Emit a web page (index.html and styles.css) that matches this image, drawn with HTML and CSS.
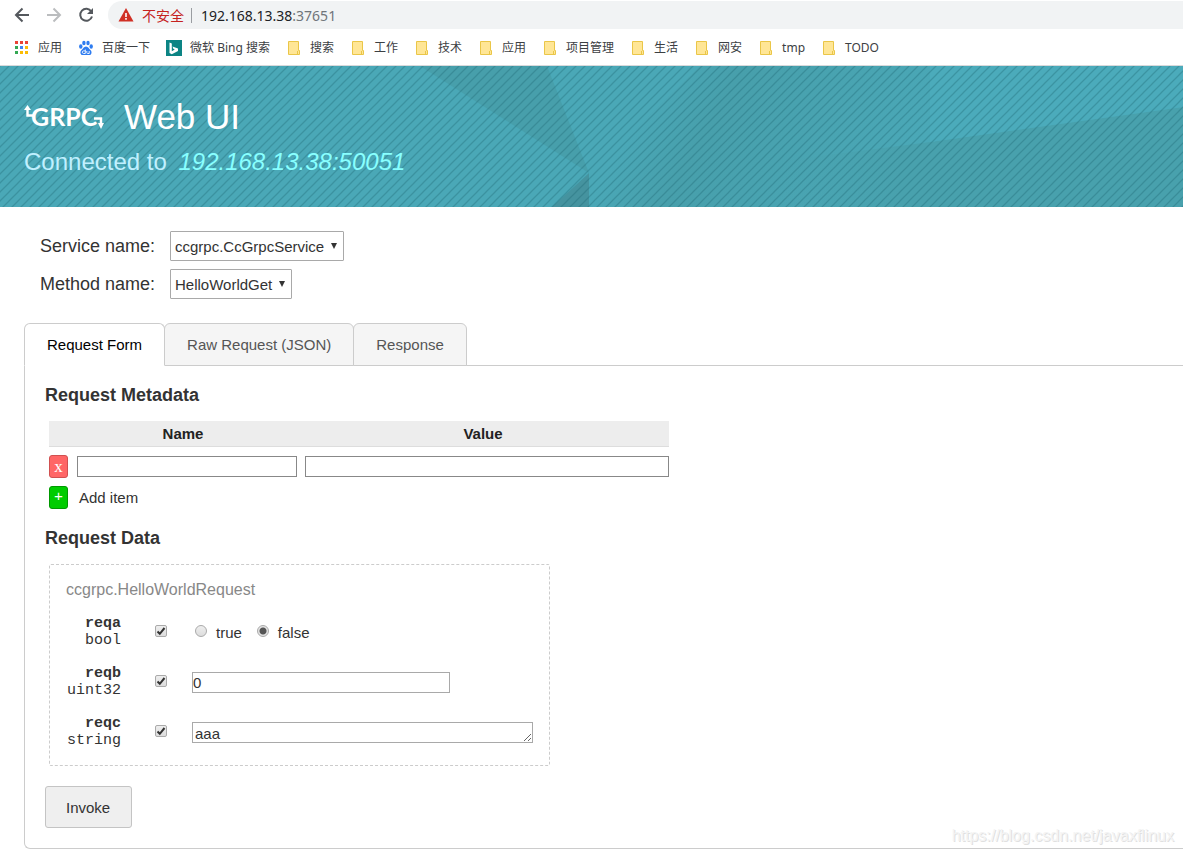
FILE: index.html
```html
<!DOCTYPE html>
<html lang="zh-CN">
<head>
<meta charset="utf-8">
<title>gRPC Web UI</title>
<link rel="stylesheet" href="styles.css">
</head>
<body>
<svg class="defs" aria-hidden="true">
  <symbol id="folder" viewBox="0 0 16 16">
    <path d="M2.500 1.500h10v9h1v4h-11z" fill="#ffe696" stroke="#eac648"/>
    <path d="M11.500 11v3.500" fill="none" stroke="#eac648"/>
  </symbol>
</svg>

<div class="toolbar">
  <button class="nav" aria-label="后退"><svg width="16" height="16" viewBox="0 0 16 16"><path d="M15 8H2.500M8.500 1.500 2 8l6.500 6.500" fill="none" stroke="#54585d" stroke-width="2"/></svg></button>
  <button class="nav" aria-label="前进"><svg width="16" height="16" viewBox="0 0 16 16"><path d="M1 8h12.500M7.500 1.500 14 8l-6.500 6.500" fill="none" stroke="#bbbdbf" stroke-width="2"/></svg></button>
  <button class="nav" aria-label="刷新"><svg width="16" height="16" viewBox="0 0 16 16"><path d="M13.300 4.500A6 6 0 1 0 14 9.500" fill="none" stroke="#54585d" stroke-width="2"/><path d="M15 1v6H9z" fill="#54585d"/></svg></button>
  <div class="omnibox">
    <svg class="warn" width="16" height="14" viewBox="0 0 16 14"><path d="M8 0l7.500 13.500H.5z" fill="#d03025"/><path d="M7.200 5h1.600v4H7.200zM7.200 10h1.600v1.700H7.200z" fill="#fff"/></svg>
    <span class="insecure">不安全</span>
    <span class="url">192.168.13.38<span class="port">:37651</span></span>
  </div>
</div>

<nav class="bookmarks">
  <a href="#"><svg viewBox="0 0 16 16"><g fill="#ea4335"><path d="M1 1h3v3H1zM6 1h3v3H6zM11 1h3v3h-3z"/></g><path d="M1 6h3v3H1zM1 11h3v3H1z" fill="#34a853"/><path d="M6 6h3v3H6z" fill="#4285f4"/><path d="M11 6h3v3h-3zM6 11h3v3H6zM11 11h3v3h-3z" fill="#fbbc05"/></svg>应用</a>
  <a href="#"><svg viewBox="0 0 16 16"><g fill="#2e7cf0"><ellipse cx="2.800" cy="6.500" rx="1.700" ry="2.200"/><ellipse cx="5.900" cy="3" rx="1.700" ry="2.300"/><ellipse cx="10" cy="3" rx="1.700" ry="2.300"/><ellipse cx="13.200" cy="6.500" rx="1.700" ry="2.200"/><path d="M8 6.500c2.400 0 2.700 2.300 4.600 3.700 1.500 1.300 1.300 4.800-1.300 4.800H4.700c-2.600 0-2.800-3.500-1.300-4.800C5.300 8.800 5.600 6.500 8 6.500z"/></g><path d="M7.300 9.500v4H5.500c-1.600 0-1.600-2.600 0-2.600h1.800M8.800 11v1.700c0 .8.500.8 1 .8h1.400V11" fill="none" stroke="#fff" stroke-width=".9"/></svg>百度一下</a>
  <a href="#"><svg viewBox="0 0 16 16"><path d="M0 0h16v16H0z" fill="#0c8484"/><path d="M3.500 2.500l2.300.9v7.800l3-1.700-1.500-.7-.8-2.200 5.500 2v2.300l-6.200 3.300-2.300-1.300z" fill="#fff"/></svg>微软 Bing 搜索</a>
  <a href="#"><svg><use href="#folder"/></svg>搜索</a>
  <a href="#"><svg><use href="#folder"/></svg>工作</a>
  <a href="#"><svg><use href="#folder"/></svg>技术</a>
  <a href="#"><svg><use href="#folder"/></svg>应用</a>
  <a href="#"><svg><use href="#folder"/></svg>项目管理</a>
  <a href="#"><svg><use href="#folder"/></svg>生活</a>
  <a href="#"><svg><use href="#folder"/></svg>网安</a>
  <a href="#"><svg><use href="#folder"/></svg>tmp</a>
  <a href="#"><svg><use href="#folder"/></svg>TODO</a>
</nav>

<header class="banner">
  <svg class="facets" viewBox="0 0 1183 141" preserveAspectRatio="xMinYMin slice" aria-hidden="true">
    <defs>
      <pattern id="stripes" width="9" height="9" patternUnits="userSpaceOnUse">
        <path d="M-2 11 11-2M-2 2 2-2M7 11l4-4" stroke="#1c6672" stroke-opacity=".34" stroke-width="1.300"/>
      </pattern>
      <linearGradient id="fold" gradientUnits="userSpaceOnUse" x1="640" y1="50" x2="860" y2="180">
        <stop offset="0" stop-color="#4aa8b7"/><stop offset=".25" stop-color="#479fab"/><stop offset="1" stop-color="#4aa8b7"/>
      </linearGradient>
      <linearGradient id="slope" gradientUnits="userSpaceOnUse" x1="780" y1="0" x2="900" y2="0">
        <stop offset="0" stop-color="#48a1ad" stop-opacity="0"/><stop offset="1" stop-color="#48a1ad"/>
      </linearGradient>
    </defs>
    <path d="M0 0h1183v141H0z" fill="#4aa8b7"/>
    <path d="M420 0h127l42 107z" fill="#479fab"/>
    <path d="M589 107 700 0h230v141H589z" fill="url(#fold)"/>
    <path d="M589 107v34H552z" fill="#45939f"/>
    <path d="M780 95 930 76 1183 41V141H780z" fill="url(#slope)"/>
    <path d="M930 0h253v41L930 76z" fill="#4babbb"/>
    <path d="M0 0h1183v141H0z" fill="url(#stripes)"/>
  </svg>
  <h1>
    <svg class="logo" width="80" height="32" viewBox="0 0 80 32" role="img" aria-label="gRPC">
      <text class="logo-text" x="7" y="25">GRPC</text>
      <path d="M3.500 7v7.500H9M70 17.500h7V24" fill="none" stroke="#fff" stroke-width="2.400"/>
      <path d="M0 9l3.500-5L7 9zM74 22h6l-3 6z" fill="#fff"/>
    </svg>
    Web UI
  </h1>
  <p>Connected to <em>192.168.13.38:50051</em></p>
</header>

<main>
  <form>
    <div class="selectors">
      <label for="service">Service name:</label>
      <span class="select"><select id="service"><option>ccgrpc.CcGrpcService</option></select></span>
      <label for="method">Method name:</label>
      <span class="select"><select id="method"><option>HelloWorldGet</option></select></span>
    </div>

    <div class="tabs" role="tablist">
      <button type="button" role="tab" class="tab active" aria-selected="true">Request Form</button>
      <button type="button" role="tab" class="tab">Raw Request (JSON)</button>
      <button type="button" role="tab" class="tab">Response</button>
    </div>

    <section class="panel">
      <h2>Request Metadata</h2>
      <table class="metadata">
        <thead><tr><th class="action"></th><th class="name">Name</th><th>Value</th></tr></thead>
        <tbody>
          <tr>
            <td><button type="button" class="mini remove">x</button></td>
            <td class="name"><input type="text" aria-label="Name"></td>
            <td class="value"><input type="text" aria-label="Value"></td>
          </tr>
          <tr>
            <td><button type="button" class="mini add" id="add">+</button></td>
            <td colspan="2" class="add-label"><label for="add">Add item</label></td>
          </tr>
        </tbody>
      </table>

      <h2>Request Data</h2>
      <div class="message">
        <h3>ccgrpc.HelloWorldRequest</h3>
        <div class="field">
          <label for="use-a"><b>reqa</b><br>bool</label>
          <input type="checkbox" id="use-a" checked>
          <div class="radios">
            <label><input type="radio" name="reqa">true</label>
            <label><input type="radio" name="reqa" checked>false</label>
          </div>
        </div>
        <div class="field">
          <label for="use-b"><b>reqb</b><br>uint32</label>
          <input type="checkbox" id="use-b" checked>
          <input type="text" class="number" value="0" aria-label="reqb">
        </div>
        <div class="field">
          <label for="use-c"><b>reqc</b><br>string</label>
          <input type="checkbox" id="use-c" checked>
          <textarea rows="1" aria-label="reqc">aaa</textarea>
        </div>
      </div>
      <button type="button" class="invoke">Invoke</button>
    </section>
  </form>
</main>
<div class="watermark">https://blog.csdn.net/javaxflinux</div>
</body>
</html>
```
FILE: styles.css
```css
* { box-sizing: border-box; }
body {
  margin: 0;
  background: #fff;
  color: #333;
  font: 15px/17px "Liberation Sans", Arial, "Noto Sans CJK SC", sans-serif;
  position: relative;
}
button, input, select, textarea { font: inherit; color: inherit; margin: 0; }
.defs { display: none; }

/* Browser chrome */
.toolbar {
  display: flex;
  align-items: center;
  gap: 16px;
  padding: 1px 0 0 14px;
  font: 14px/28px "Noto Sans", "Noto Sans CJK SC", sans-serif;
}
.nav { display: flex; padding: 0; border: 0; background: none; }
.omnibox {
  display: flex;
  align-items: center;
  flex: 1;
  height: 28px;
  margin-left: -2px;
  padding-left: 10px;
  border-radius: 14px 0 0 14px;
  background: #f1f3f4;
}
.insecure {
  margin: 0 7px 0 8px;
  color: #c5221f;
  font-family: "Noto Sans CJK SC", sans-serif;
}
.url {
  padding-left: 9px;
  border-left: 1px solid #9a9da1;
  line-height: 15px;
  color: #202124;
}
.port { color: #70757a; }
.bookmarks {
  display: flex;
  align-items: center;
  gap: 16px;
  height: 37px;
  padding: 2px 0 0 14px;
  border-bottom: 1px solid #d8d9db;
  font: 12px/18px "Noto Sans", "Noto Sans CJK SC", sans-serif;
}
.bookmarks a {
  display: flex;
  align-items: center;
  gap: 8px;
  color: #3c4043;
  text-decoration: none;
  white-space: nowrap;
}
.bookmarks svg { width: 16px; height: 16px; margin-bottom: 1px; }

/* Banner */
.banner {
  position: relative;
  padding: 30px 24px 31px;
  overflow: hidden;
  background: #4aa8b7;
}
.facets { position: absolute; inset: 0; width: 100%; height: 100%; }
.banner h1 {
  position: relative;
  display: flex;
  align-items: center;
  gap: 20px;
  margin: 0 0 10px;
  color: #fff;
  font-size: 35px;
  font-weight: normal;
  line-height: 42px;
}
.logo-text { fill: #fff; font: bold 25px Lato, "Liberation Sans", sans-serif; }
.banner p {
  position: relative;
  margin: 0;
  color: #c0f0ff;
  font-size: 24px;
  line-height: 28px;
}
.banner em { margin-left: 5px; color: #8ff; }

/* Service and method pickers */
main { padding: 24px 0 5px 24px; }
.selectors {
  display: grid;
  grid-template-columns: 130px auto;
  align-items: center;
  justify-items: start;
  row-gap: 8px;
  padding-left: 16px;
  margin-bottom: 24px;
}
.selectors label { font-size: 18px; line-height: 20px; white-space: nowrap; }
.select { position: relative; display: flex; }
.select::after {
  content: "";
  position: absolute;
  top: 12px;
  right: 7px;
  border: solid transparent;
  border-width: 6px 3px 0;
  border-top-color: #333;
  pointer-events: none;
}
select {
  appearance: none;
  height: 30px;
  padding: 0 18px 0 4px;
  border: 1px solid #a9a9a9;
  border-radius: 1px;
  background: #fff;
}

/* Tabs */
.tabs { display: flex; }
.tab {
  height: 43px;
  margin: 0 -1px -1px 0;
  padding: 0 22px;
  border: 1px solid #ccc;
  border-radius: 6px 6px 0 0;
  background: #f5f5f5;
  color: #555;
}
.tab.active { border-bottom-color: #fff; background: #fff; color: #000; z-index: 1; }
.panel {
  padding: 19px 20px 20px;
  border: 1px solid #ccc;
  border-right: 0;
  border-radius: 0 0 0 6px;
}
h2 { margin: 0; font-size: 18px; line-height: 20px; }

/* Metadata table */
.metadata {
  width: 620px;
  margin: 16px 0 19px 4px;
  border-spacing: 0;
  table-layout: fixed;
}
.metadata th {
  height: 26px;
  padding: 0 4px 0 0;
  border-bottom: 1px solid #ddd;
  background: #ededed;
  color: #222;
}
.metadata .action { width: 20px; }
.metadata .name { width: 232px; }
.metadata td { padding: 8px 0 0; }
.metadata td.name { padding: 8px 4px 0 8px; }
.metadata td.value { padding-left: 4px; }
.metadata td.add-label { padding-left: 10px; }
input[type="text"] {
  display: block;
  width: 100%;
  height: 21px;
  padding: 0;
  border: 1px solid #888;
  background: #fff;
}
.mini {
  display: block;
  width: 19px;
  height: 23px;
  padding: 0;
  border: 1px solid #d05050;
  border-radius: 3px;
  background: #f66;
  color: #fff;
  font: 15px/17px "Liberation Mono", "Courier New", monospace;
}
.mini.remove { font-family: "Liberation Serif", serif; font-size: 17px; }
.mini.add { border-color: #090; background: #0c0; }

/* Message editor */
.message {
  width: 501px;
  margin: 16px 0 20px 4px;
  padding: 15px 16px 8px;
  border: 1px dashed #ccc;
  border-radius: 2px;
}
h3 {
  margin: 0 0 8px;
  color: #888;
  font-size: 16px;
  font-weight: normal;
  line-height: 19px;
}
.field {
  display: grid;
  grid-template-columns: 55px 12px 1fr;
  align-items: center;
  height: 50px;
  column-gap: 34px;
}
.field > label {
  font-family: "Liberation Mono", "Courier New", monospace;
  text-align: right;
}
.field > :last-child { margin-left: -9px; }
.field input.number { width: 258px; border-color: #a9a9a9; }
textarea {
  width: 341px;
  height: 21px;
  padding: 2px;
  border: 1px solid #a9a9a9;
  background: #fff;
  overflow: hidden;
}
input[type="checkbox"], input[type="radio"] {
  appearance: none;
  width: 12px;
  height: 12px;
  margin-bottom: 2px;
  border: 1px solid #aaa;
  border-radius: 2px;
  background: linear-gradient(#eee, #ddd);
}
input[type="checkbox"]:checked {
  background: url("data:image/svg+xml,%3Csvg xmlns='http://www.w3.org/2000/svg' viewBox='0 0 10 10'%3E%3Cpath d='M1.500 5.500l2.300 2.300L8.500 2' fill='none' stroke='%23333' stroke-width='2'/%3E%3C/svg%3E") center / 10px no-repeat, linear-gradient(#eee, #ddd);
}
input[type="radio"] { border-radius: 50%; margin-right: 9px; }
input[type="radio"]:checked {
  background: radial-gradient(circle, #555 0 3px, #e4e4e4 4px);
}
.radios { display: flex; gap: 15px; padding-left: 3px; }
.radios label { display: flex; align-items: center; }
.invoke {
  display: block;
  height: 42px;
  padding: 0 21px 0 20px;
  border: 1px solid #c4c4c4;
  border-radius: 3px;
  background: #efefef;
}
.watermark {
  position: absolute;
  right: 9px;
  bottom: 8px;
  color: #f4f4f4;
  font-size: 16px;
  line-height: 20px;
  text-shadow: 1px 1px 0 #e0e0e0;
}
```
